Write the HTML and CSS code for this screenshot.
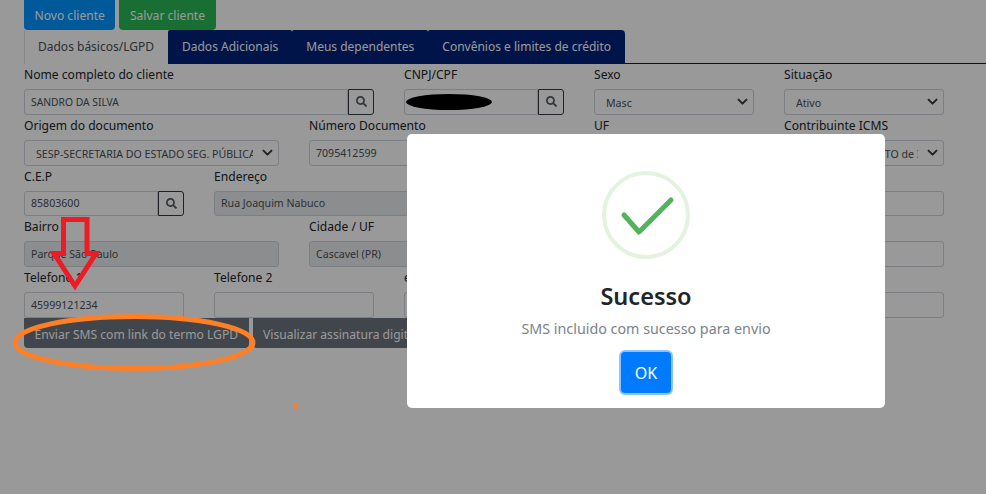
FILE: index.html
```html
<!DOCTYPE html>
<html lang="pt-BR">
<head>
    <meta charset="UTF-8">
    <meta name="viewport" content="width=device-width, initial-scale=1.0">
    <title>Cadastro de cliente</title>
    <link rel="stylesheet" href="styles.css">
</head>
<body>
    <svg class="icon-defs" width="0" height="0">
        <symbol id="icon-search" viewBox="0 0 512 512">
            <path d="M505 442.7L405.3 343c-4.5-4.5-10.6-7-17-7H372c27.6-35.3 44-79.7 44-128C416 93.1 322.9 0 208 0S0 93.1 0 208s93.1 208 208 208c48.3 0 92.7-16.4 128-44v16.3c0 6.4 2.5 12.5 7 17l99.7 99.7c9.4 9.4 24.6 9.4 33.9 0l28.3-28.3c9.4-9.4 9.4-24.6.1-34zM208 336c-70.7 0-128-57.2-128-128 0-70.7 57.2-128 128-128 70.7 0 128 57.2 128 128 0 70.7-57.2 128-128 128z"/>
        </symbol>
    </svg>

    <div class="page">
        <div class="top-actions">
            <button class="btn btn-blue">Novo cliente</button>
            <button class="btn btn-green">Salvar cliente</button>
        </div>

        <div class="tabs">
            <div class="tab active">Dados básicos/LGPD</div>
            <div class="tab">Dados Adicionais</div>
            <div class="tab">Meus dependentes</div>
            <div class="tab">Convênios e limites de crédito</div>
        </div>

        <div class="form-grid">
            <div class="field span-4">
                <label>Nome completo do cliente</label>
                <div class="input-group">
                    <input class="input caps" type="text" value="SANDRO DA SILVA">
                    <button class="search-btn"><svg><use href="#icon-search"/></svg></button>
                </div>
            </div>
            <div class="field span-2">
                <label>CNPJ/CPF</label>
                <div class="input-group">
                    <input class="input" type="text">
                    <button class="search-btn"><svg><use href="#icon-search"/></svg></button>
                </div>
            </div>
            <div class="field span-2">
                <label>Sexo</label>
                <select class="select"><option>Masc</option></select>
            </div>
            <div class="field span-2">
                <label>Situação</label>
                <select class="select"><option>Ativo</option></select>
            </div>

            <div class="field span-3">
                <label>Origem do documento</label>
                <select class="select"><option>SESP-SECRETARIA DO ESTADO SEG. PÚBLICA</option></select>
            </div>
            <div class="field span-3">
                <label>Número Documento</label>
                <input class="input" type="text" value="7095412599">
            </div>
            <div class="field span-2">
                <label>UF</label>
                <select class="select"><option>PR</option></select>
            </div>
            <div class="field span-2">
                <label>Contribuinte ICMS</label>
                <select class="select"><option>Contribuinte ISENTO de Inscrição</option></select>
            </div>

            <div class="field span-2">
                <label>C.E.P</label>
                <div class="input-group">
                    <input class="input" type="text" value="85803600">
                    <button class="search-btn"><svg><use href="#icon-search"/></svg></button>
                </div>
            </div>
            <div class="field span-4">
                <label>Endereço</label>
                <input class="input readonly" type="text" value="Rua Joaquim Nabuco" readonly>
            </div>
            <div class="field span-2">
                <label>Número</label>
                <input class="input" type="text">
            </div>
            <div class="field span-2">
                <label>Complemento</label>
                <input class="input" type="text">
            </div>

            <div class="field span-3">
                <label>Bairro</label>
                <input class="input readonly" type="text" value="Parque São Paulo" readonly>
            </div>
            <div class="field span-3">
                <label>Cidade / UF</label>
                <input class="input readonly" type="text" value="Cascavel (PR)" readonly>
            </div>
            <div class="field span-2">
                <label>Nascimento</label>
                <input class="input" type="text">
            </div>
            <div class="field span-2">
                <label>Profissão</label>
                <input class="input" type="text">
            </div>

            <div class="field span-2">
                <label>Telefone 1</label>
                <input class="input" type="text" value="45999121234">
            </div>
            <div class="field span-2">
                <label>Telefone 2</label>
                <input class="input" type="text">
            </div>
            <div class="field span-4">
                <label>e-mail</label>
                <input class="input" type="text">
            </div>
            <div class="field span-2">
                <label>Contato</label>
                <input class="input" type="text">
            </div>
        </div>

        <div class="bottom-actions">
            <button class="btn btn-dark">Enviar SMS com link do termo LGPD</button>
            <button class="btn btn-dark">Visualizar assinatura digital</button>
        </div>
    </div>

    <!-- Modal -->
    <div class="backdrop">
        <div class="modal">
            <svg class="success-icon" width="88" height="88" viewBox="0 0 88 88">
                <circle cx="44" cy="44" r="42" fill="none" stroke="#e3f3e0" stroke-width="4"/>
                <polyline points="22,44 37,61 69,29" fill="none" stroke="#52b45a" stroke-width="5" stroke-linecap="round" stroke-linejoin="round"/>
            </svg>
            <h2 class="modal-title">Sucesso</h2>
            <p class="modal-text">SMS incluido com sucesso para envio</p>
            <button class="ok-btn">OK</button>
        </div>
    </div>

    <!-- Marcas feitas em cima do print -->
    <svg class="markup" width="986" height="494" viewBox="0 0 986 494">
        <ellipse cx="449" cy="102" rx="43" ry="8" fill="#000"/>
        <polygon points="63.5,219.5 87,219.5 87,253.5 96,253.5 75,286 54,253.5 63.5,253.5" fill="none" stroke="#ed1c24" stroke-width="5"/>
        <ellipse cx="134" cy="342.5" rx="119" ry="26" fill="none" stroke="#ff7f27" stroke-width="5"/>
        <polygon points="296,403.5 298.5,406 296,408.5 293.5,406" fill="none" stroke="#ff7f27" stroke-width="1.5"/>
    </svg>
</body>
</html>
```

FILE: styles.css
```css
* {
    box-sizing: border-box;
}

body {
    font-family: "Noto Sans", "Open Sans", Arial, sans-serif;
    margin: 0;
    padding: 0;
    height: 494px;
    overflow: hidden;
    background-color: #fff;
    color: #212529;
}

.icon-defs {
    display: block;
    height: 0;
}

.page {
    padding-left: 24px;
}

/* Buttons */
.top-actions {
    display: flex;
    gap: 4px;
    height: 30px;
}

.btn {
    border: 0;
    border-radius: 0 0 4px 4px;
    padding: 0 10.5px;
    height: 30px;
    font-family: inherit;
    font-size: 12.1px;
    color: #fff;
}

.btn-blue {
    background-color: #0095ff;
}

.btn-green {
    background-color: #2bb755;
}

.btn-dark {
    padding-top: 3px;
    background-color: #6c757d;
}

/* Tabs */
.tabs {
    display: flex;
    height: 34px;
    border-bottom: 1px solid #00205b;
}

.tab {
    height: 34px;
    padding: 0 14px;
    line-height: 33px;
    font-size: 12px;
    color: #fff;
    background-color: #00227c;
    border-radius: 2px 2px 0 0;
}

.tab:last-child {
    border-top-right-radius: 4px;
}

.tab.active {
    padding-left: 13px;
    color: #495057;
    background-color: #fff;
    border-left: 1px solid #dee2e6;
    border-radius: 0;
}

/* Form */
.form-grid {
    display: grid;
    grid-template-columns: repeat(10, 65px);
    column-gap: 30px;
}

.field {
    min-width: 0;
    height: 50.75px;
}

.field label {
    display: block;
    height: 25px;
    line-height: 21px;
    font-size: 12.1px;
}

.span-2 { grid-column: span 2; }
.span-3 { grid-column: span 3; }
.span-4 { grid-column: span 4; }

.input,
.select {
    display: block;
    width: 100%;
    height: 25.75px;
    border: 1px solid #ced4da;
    border-radius: 3px;
    font-family: inherit;
    font-size: 10.6px;
    color: #495057;
    background-color: #fff;
}

.input {
    padding: 0 6px;
}

.input.caps {
    font-size: 10.3px;
}

.input.readonly {
    background-color: #e9ecef;
}

.select {
    appearance: none;
    padding: 2px 25px 0 11px;
    background-image: url("data:image/svg+xml,%3Csvg xmlns='http://www.w3.org/2000/svg' viewBox='0 0 16 12'%3E%3Cpath fill='none' stroke='%23343a40' stroke-linecap='round' stroke-linejoin='round' stroke-width='3' d='M2 2.5l6 6 6-6'/%3E%3C/svg%3E");
    background-repeat: no-repeat;
    background-position: right 5px center;
    background-size: 11px 8px;
}

.input-group {
    display: flex;
}

.input-group .input {
    flex: 1;
    min-width: 0;
    border-radius: 3px 0 0 3px;
}

.search-btn {
    display: flex;
    align-items: center;
    justify-content: center;
    flex: none;
    width: 26px;
    height: 25.75px;
    padding: 0;
    border: 1px solid #343a40;
    border-radius: 0 3px 3px 0;
    background: transparent;
}

.search-btn svg {
    width: 11px;
    height: 11px;
    fill: #555c63;
}

.bottom-actions {
    display: flex;
    gap: 4px;
}

/* Modal */
.backdrop {
    position: fixed;
    top: 0;
    left: 0;
    right: 0;
    bottom: 0;
    padding: 134px 0 0 407px;
    background-color: rgba(0, 0, 0, 0.4);
}

.modal {
    display: flex;
    flex-direction: column;
    align-items: center;
    width: 478px;
    height: 274px;
    padding-top: 37px;
    border-radius: 5px;
    background-color: #fff;
}

.success-icon {
    flex: none;
}

.modal-title {
    margin: 21px 0 0;
    font-size: 23.5px;
    line-height: 32px;
    font-weight: 600;
    color: #212529;
}

.modal-text {
    margin: 7px 0 0;
    font-size: 14.3px;
    line-height: 20px;
    color: #7b838a;
}

.ok-btn {
    width: 50px;
    height: 41px;
    margin-top: 13px;
    border: 0;
    border-radius: 4px;
    font-family: inherit;
    font-size: 16px;
    color: #fff;
    background-color: #007bff;
    box-shadow: 0 0 0 2px #8cc4ff;
}

/* Print markup */
.markup {
    position: absolute;
    top: 0;
    left: 0;
    pointer-events: none;
}
```
